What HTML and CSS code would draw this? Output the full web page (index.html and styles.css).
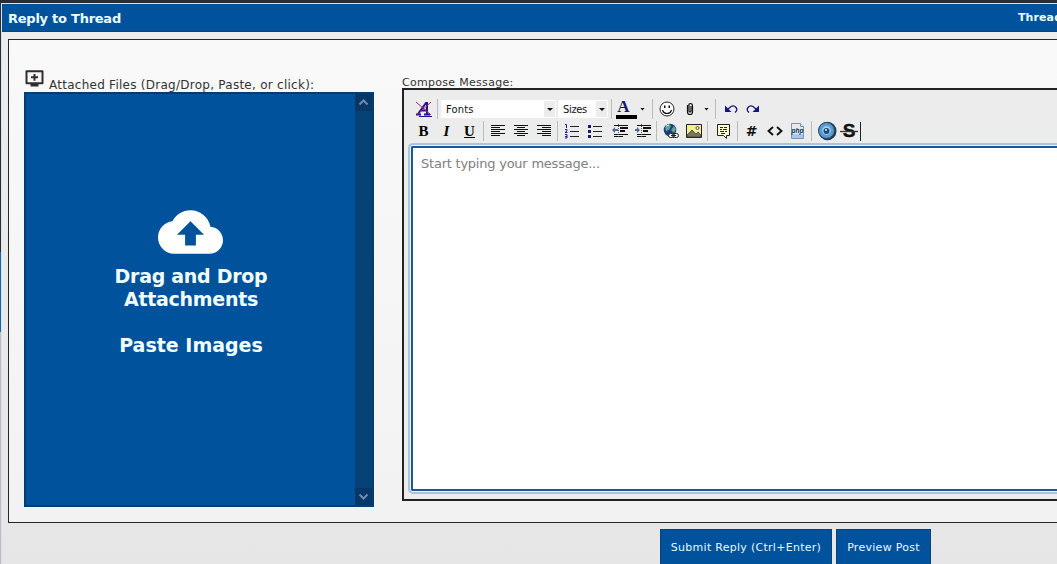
FILE: index.html
```html
<!DOCTYPE html>
<html lang="en">
<head>
<meta charset="utf-8">
<title>Reply to Thread</title>
<link rel="stylesheet" href="styles.css">
</head>
<body>
<div class="page-strip"></div>
<div class="window">
  <header class="titlebar"><span class="title">Reply to Thread</span><span class="thread">Thread</span></header>
  <main class="panel">
    <section class="attachments">
      <div class="attach-label">
        <svg class="queue" viewBox="0 0 20 17"><path d="M2 1.200h16v12H2z" fill="none" stroke="#302d2c" stroke-width="2" stroke-linejoin="round"/><path d="M6 14h8v2.400H6zM9 4h2v2.300h2.500v2H11v2.400H9V8.300H6.500v-2H9z" fill="#302d2c"/></svg>
        <span>Attached Files (Drag/Drop, Paste, or click):</span>
      </div>
      <div class="dropzone">
        <div class="drop-content">
          <svg class="cloud" viewBox="0 4 24 16"><path fill="#fff" d="M19.350 10.040C18.670 6.590 15.640 4 12 4 9.110 4 6.600 5.640 5.350 8.040 2.340 8.360 0 10.910 0 14c0 3.310 2.690 6 6 6h13c2.760 0 5-2.240 5-5 0-2.640-2.050-4.780-4.650-4.960zM14 13v4h-4v-4H7l5-5 5 5h-3z"/></svg>
          <p>Drag and Drop<br>Attachments</p>
          <p class="paste">Paste Images</p>
        </div>
        <div class="scrollbar">
          <div class="scroll-btn"><svg viewBox="0 0 17 17"><path d="M4.500 10.500l4-4 4 4" /></svg></div>
          <div class="scroll-btn"><svg viewBox="0 0 17 17"><path d="M4.500 6.500l4 4 4-4" /></svg></div>
        </div>
      </div>
    </section>
    <section class="compose">
      <label class="compose-label">Compose Message:</label>
      <div class="editor">
        <div class="toolbar">
          <div class="row">
            <span class="tool"><svg viewBox="0 0 16 16"><path d="M2 13L10 2h1v11M5 9.500h6M0 13.500h5M8 13.500h6" fill="none" stroke="#20139a" stroke-width="2"/><path d="M3 15.500h13" stroke="#20139a"/><path d="M0 1l15 13M15 1L1 14" stroke="#a02860" stroke-width="1"/></svg></span>
            <i class="sep s1"></i>
            <span class="select fonts"><b>Fonts</b><i class="arrow"></i></span>
            <span class="select sizes"><b>Sizes</b><i class="arrow"></i></span>
            <i class="sep s2"></i>
            <span class="color"><b>A</b><i class="swatch"></i></span><i class="arrow color-arrow"></i>
            <i class="sep s3"></i>
            <span class="tool"><svg viewBox="0 0 16 16"><circle cx="8" cy="8" r="7" fill="#fff" stroke="#222" stroke-width="1"/><path d="M5 4.500h1.500v2.500H5zM9.500 4.500H11v2.500H9.500z" fill="#111"/><path d="M3.500 9q1 3.500 4.500 3.500T12.500 9" fill="none" stroke="#111" stroke-width="1.200"/></svg></span>
            <span class="tool"><svg viewBox="0 0 16 16"><path d="M5.500 4v7q0 2.500 2.500 2.500t2.500-2.500V5q0-2.500-2-2.500T7 5v5q0 1 1 1t1-1V5" fill="none" stroke="#111" stroke-width="1.200"/></svg></span>
            <i class="arrow clip-arrow"></i>
            <i class="sep s4"></i>
            <span class="tool"><svg viewBox="0 0 16 16"><path d="M5 8L8 5.500q3-1.500 5 1t-1 5" fill="none" stroke="#17147d" stroke-width="1.300"/><path d="M2 4.500v6.500h6.500z" fill="#17147d"/></svg></span>
            <span class="tool redo"><svg viewBox="0 0 16 16"><path d="M11 8L8 5.500q-3-1.500-5 1t1 5" fill="none" stroke="#17147d" stroke-width="1.300"/><path d="M14 4.500v6.500H7.500z" fill="#17147d"/></svg></span>
          </div>
          <div class="row">
            <span class="tool letter">B</span><span class="tool letter italic">I</span><span class="tool letter underline">U</span>
            <i class="sep"></i>
            <span class="tool"><svg viewBox="0 0 16 16"><path d="M1 2.500h14M1 4.500h9M1 6.500h14M1 8.500h9M1 10.500h14M1 12.500h9" stroke="#111"/></svg></span>
            <span class="tool"><svg viewBox="0 0 16 16"><path d="M1 2.500h14M4 4.500h8M1 6.500h14M4 8.500h8M1 10.500h14M4 12.500h8" stroke="#111"/></svg></span>
            <span class="tool"><svg viewBox="0 0 16 16"><path d="M1 2.500h14M6 4.500h9M1 6.500h14M6 8.500h9M1 10.500h14M6 12.500h9" stroke="#111"/></svg></span>
            <i class="sep"></i>
            <span class="tool"><svg viewBox="0 0 16 16"><path d="M6 3.500h9M6 8.500h9M6 13.500h9" stroke="#222"/><path d="M1 1.500h1.500V5M1 6.500h2v1.500L1 9.500h2.500M1 11.500h2v3.500H1M1 13.500h2" fill="none" stroke="#20207c"/></svg></span>
            <span class="tool"><svg viewBox="0 0 16 16"><path d="M6 3.500h9M6 8.500h9M6 13.500h9" stroke="#222"/><path d="M1 2h3v3H1zM1 7h3v3H1zM1 12h3v3H1z" fill="#17176f"/></svg></span>
            <span class="tool indent"><svg viewBox="0 0 16 16"><path d="M2 2.500h14M2 11.500h14M2 13.500h9" stroke="#111"/><path d="M8 5h8M8 8h5" stroke="#111" stroke-width="2"/><path d="M6.500 1v14" stroke="#555" stroke-dasharray="1 1"/><path d="M0 7l3-3v2h3v2H3v2z" fill="#56659b"/></svg></span>
            <span class="tool"><svg viewBox="0 0 16 16"><path d="M2 2.500h14M2 11.500h14M2 13.500h9" stroke="#111"/><path d="M8 5h8M8 8h5" stroke="#111" stroke-width="2"/><path d="M6.500 1v14" stroke="#555" stroke-dasharray="1 1"/><path d="M5 7L2 4v2H0v2h2v2z" fill="#56659b"/></svg></span>
            <i class="sep"></i>
            <span class="tool"><svg viewBox="0 0 16 16"><circle cx="7" cy="7" r="6.300" fill="#173e81"/><path d="M2 4l4-3 2 2-2 4-3 1zM8 7l3-4 2 3-2 4z" fill="#62a78c"/><path d="M3 3l3-1" stroke="#dbeaf5"/><rect x="5.500" y="10.500" width="6" height="4" rx="2" fill="#eee" stroke="#222"/><rect x="9.500" y="10.500" width="6" height="4" rx="2" fill="none" stroke="#222"/><path d="M8 12.500h5" stroke="#222"/></svg></span>
            <span class="tool"><svg viewBox="0 0 16 16"><path d="M.5 1.500h15v13H.5z" fill="#f5ed91" stroke="#222"/><circle cx="11.500" cy="5" r="1.500" fill="#fff" stroke="#554"/><path d="M1 12l5-5 4 4 2-2 3 3v2H1z" fill="#77755c" stroke="#33332b" stroke-width=".7"/></svg></span>
            <i class="sep"></i>
            <span class="tool quote"><svg viewBox="0 0 16 16"><path d="M2.500 1.500h12v11h-3v3l-3-3h-6z" fill="#ffffdc" stroke="#222"/><path d="M5 4.500h3m1 0h3M5 6.500h2m1 0h4M5 8.500h4m1 0h2M6 10.500h4" stroke="#222"/></svg></span>
            <i class="sep"></i>
            <span class="tool hash">#</span>
            <span class="tool"><svg viewBox="0 0 16 16"><path d="M6 4L1.500 8 6 12M10 4l4.500 4L10 12" fill="none" stroke="#111" stroke-width="1.900"/></svg></span>
            <span class="tool"><svg viewBox="0 0 16 16"><path d="M1.500.5h9l3 3v12h-12z" fill="#dcecf9" stroke="#7896b3"/><path d="M10.500.5v3h3" fill="#fff" stroke="#7896b3"/><path d="M2 11h11v4H2z" fill="#a5cbe8"/><text x="7.500" y="9.500" text-anchor="middle" class="php">php</text></svg></span>
            <i class="sep wide"></i>
            <span class="tool"><svg class="speaker" viewBox="0 0 20 20"><ellipse cx="10.500" cy="10" rx="9" ry="9.300" fill="#273b4d"/><ellipse cx="9.500" cy="9.500" rx="8" ry="8" fill="#5799d2" stroke="#22435f"/><circle cx="9.500" cy="9.500" r="4.800" fill="#a9cfee" stroke="#5b9bd1"/><circle cx="9.500" cy="10" r="3" fill="#164e82"/><circle cx="9" cy="9" r="1" fill="#d9edff"/></svg></span>
            <span class="tool strike"><svg viewBox="0 0 18 20"><text x="9" y="16" text-anchor="middle">S</text><path d="M0 10.500h18" stroke="#333" stroke-width="1.300"/></svg></span>
          </div>
        </div>
        <div class="message"><span>Start typing your message...</span></div>
      </div>
    </section>
  </main>
  <footer class="actions"><button>Submit Reply (Ctrl+Enter)</button><button class="preview">Preview Post</button></footer>
</div>
<div class="edge-accent"></div>
</body>
</html>
```
FILE: styles.css
```css
* { box-sizing: border-box; }
body { margin: 0; width: 1057px; height: 564px; overflow: hidden; background: #bcbcbc; font-family: "DejaVu Sans", Verdana, sans-serif; color: #333; }
svg { display: block; }
.page-strip { height: 3px; background: #2b2d30; }
.window { margin-left: 1px; height: 561px; border: solid #d8e2ec; border-width: 1px 0 0 1px; background: linear-gradient(#eeedee, #e6e6e6); }
.titlebar { height: 28px; background: #00529c; border-bottom: 1px solid #07427c; color: #eaffff; display: flex; align-items: center; font-weight: bold; white-space: nowrap; }
.title { font-size: 13px; letter-spacing: -0.25px; margin-left: 6px; width: 1010px; flex: none; padding-top: 1px; }
.thread { font-size: 11px; letter-spacing: .1px; padding-bottom: 1px; }
.panel { margin: 7px 0 0 6px; width: 1100px; height: 484px; border: 1px solid #262626; background: linear-gradient(#f9f9f9, #f2f2f2); display: flex; padding: 30px 0 0 15px; }
.attachments { width: 378px; }
.attach-label { height: 22px; display: flex; font-size: 12px; white-space: nowrap; }
.attach-label span { margin: 8px 0 0 4px; line-height: 14px; letter-spacing: .26px; }
.queue { width: 21px; height: 17px; }
.dropzone { width: 350px; height: 415px; border: 2px solid #063c70; background: #00529c; display: flex; color: #f2ffff; }
.drop-content { width: 329px; padding-top: 116px; font-size: 19px; line-height: 23px; font-weight: bold; text-align: center; }
.drop-content p { margin: 11px 0 0 1px; letter-spacing: -.28px; }
.drop-content .paste { margin-top: 23px; letter-spacing: 0; }
.cloud { width: 65px; height: 44px; margin: 0 auto 0 132px; }
.scrollbar { width: 17px; background: #064276; display: flex; flex-direction: column; justify-content: space-between; }
.scroll-btn { height: 17px; background: #063767; }
.scroll-btn svg { width: 17px; height: 17px; fill: none; stroke: #6d8daf; stroke-width: 2; }
.compose { width: 690px; padding-top: 4px; }
.compose-label { display: block; height: 14px; font-size: 11px; line-height: 18px; letter-spacing: .3px; }
.editor { height: 413px; border: 2px solid #242123; background: #ececec; padding: 8px 0 0 4px; }
.toolbar { height: 45px; padding-left: 4px; }
.row { height: 22px; display: flex; align-items: center; }
.tool { width: 23px; height: 22px; display: flex; align-items: center; justify-content: center; flex: none; }
.tool svg { width: 16px; height: 16px; }
.tool .speaker { width: 20px; height: 20px; }
.sep { width: 5px; height: 20px; flex: none; background: linear-gradient(#bbb, #bbb) 2px 0 / 1px 100% no-repeat; }
.s1 { margin-right: 1px; }
.s2 { margin: 0 1px 0 1px; }
.s3 { margin: 0 0 0 5px; }
.s4 { margin: 0 1px 0 4px; }
.select { height: 18px; background: #fff; display: flex; align-items: center; justify-content: space-between; font-size: 11px; color: #111; }
.select b { font-weight: normal; font-family: "DejaVu Sans Condensed", "DejaVu Sans", sans-serif; letter-spacing: .2px; margin-left: 5px; }
.fonts { width: 115px; }
.sizes { width: 50px; margin-left: 2px; }
.sizes b { letter-spacing: -.3px; }
.arrow { width: 5px; height: 3px; background: #111; clip-path: polygon(0 0, 100% 0, 50% 100%); flex: none; }
.select .arrow { width: 11px; height: 16px; clip-path: none; margin-right: 1px; background: #ececec; display: flex; align-items: center; justify-content: center; }
.select .arrow::after { content: ""; border: solid transparent; border-width: 3px 3px 0; border-top-color: #111; }
.color { width: 22px; height: 20px; display: flex; flex-direction: column; align-items: center; }
.color b { font: bold 17px/15px "Liberation Serif", serif; color: #17176f; margin-right: 5px; }
.swatch { width: 21px; height: 4px; background: #000; margin-top: 1px; }
.color-arrow { margin-left: 3px; }
.clip-arrow { margin-left: 3px; }
.sep + .tool + .tool + .clip-arrow { margin-left: 3px; }
.redo { margin-left: -1px; }
.letter { font: bold 15px/20px "Liberation Serif", serif; color: #000; }
.italic { font-style: italic; }
.underline { text-decoration: underline; }
.indent { margin-left: 2px; }
.quote { width: 25px; }
.sep.wide { width: 6px; }
.hash { font-size: 14px; font-weight: bold; color: #111; }
.php { font: italic bold 6.5px "Liberation Sans", sans-serif; fill: #172e48; }
.strike { border-right: 1px solid #222; height: 19px; }
.strike svg { width: 18px; height: 20px; font: bold 19px "Liberation Sans", sans-serif; fill: #111; stroke: #111; stroke-width: .4; }
.message { margin-left: 0; height: 351px; border: solid #a9c3e2; border-width: 2px 0 2px 2px; border-radius: 5px 0 0 5px; background: #eaf5ff; padding: 1px 0 1px 1px; }
.message span { display: block; height: 100%; border: solid #19569a; border-width: 2px 0 2px 2px; border-radius: 2px 0 0 2px; background: #fff; padding: 8px; color: #808080; font-size: 13px; line-height: 15px; letter-spacing: -.23px; }
.actions { height: 41px; display: flex; padding: 6px 0 0 658px; gap: 4px; }
button { width: 172px; height: 36px; padding: 0; border: 1px solid #07427c; background: #00529c; color: #e4faff; font: 11px "DejaVu Sans", Verdana, sans-serif; letter-spacing: .28px; white-space: nowrap; }
.preview { width: 95px; }
.edge-accent { position: absolute; left: 0; top: 0; width: 1px; height: 332px; background: linear-gradient(#2b2d30 252px, #1766a9 252px); }
```
